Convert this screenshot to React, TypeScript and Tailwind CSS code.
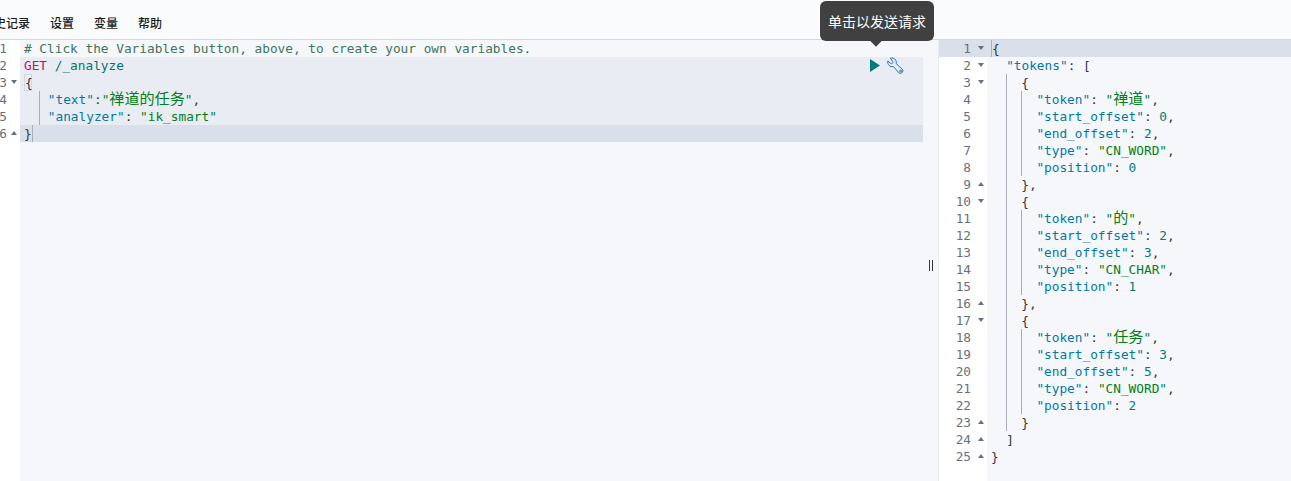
const mono = "font-['DejaVu_Sans_Mono','Noto_Sans_CJK_SC',monospace]"

type Tok = [string, string]

const K = 'text-[#0079a5]'
const S = 'text-[#017f1c]'
const N = 'text-[#017d73]'
const P = 'text-[#343741]'

function Cjk({ children }: { children: string }) {
  return <span className="font-['Noto_Sans_CJK_SC',sans-serif] text-[15.1px] leading-[0]">{children}</span>
}

function Line({ guides = 0, pad = 0, thin = false, toks }: { guides?: number; pad?: number; thin?: boolean; toks: Tok[] }) {
  return (
    <div className="flex h-[17px] items-stretch whitespace-pre leading-[17px]">
      {Array.from({ length: pad }).map((_, i) => (
        <span key={i} className="inline-block w-[15.14px] shrink-0" />
      ))}
      {Array.from({ length: guides }).map((_, i) => (
        <span key={i} className={thin ? 'inline-block w-px shrink-0 bg-[#a8adb8]' : 'inline-block w-[15.14px] shrink-0 border-l border-[#a8adb8]'} />
      ))}
      <span>
        {toks.map(([t, c], i) => (
          <span key={i} className={c}>
            {t.split(/([\u4e00-\u9fff]+)/).map((p, j) => (j % 2 ? <Cjk key={j}>{p}</Cjk> : p))}
          </span>
        ))}
      </span>
    </div>
  )
}

function Fold({ dir }: { dir?: 'up' | 'down' }) {
  if (!dir) return null
  return (
    <span
      className={
        dir === 'down'
          ? 'inline-block h-0 w-0 border-x-[3px] border-t-[4px] border-x-transparent border-t-[#69707d]'
          : 'inline-block h-0 w-0 border-x-[3px] border-b-[4px] border-x-transparent border-b-[#69707d]'
      }
    />
  )
}

const leftFolds: Record<number, 'up' | 'down'> = { 3: 'down', 6: 'up' }
const rightFolds: Record<number, 'up' | 'down'> = {
  1: 'down', 2: 'down', 3: 'down', 9: 'up', 10: 'down', 16: 'up', 17: 'down', 23: 'up', 24: 'up', 25: 'up',
}

function tokenRows(word: string, start: number, end: number, type: string, pos: number, more: boolean) {
  return (
    <div key={word}>
      <Line pad={1} guides={1} toks={[['{', P]]} />
      <Line pad={1} guides={2} toks={[['"token"', K], [': ', P], [`"${word}"`, S], [',', P]]} />
      <Line pad={1} guides={2} toks={[['"start_offset"', K], [': ', P], [String(start), N], [',', P]]} />
      <Line pad={1} guides={2} toks={[['"end_offset"', K], [': ', P], [String(end), N], [',', P]]} />
      <Line pad={1} guides={2} toks={[['"type"', K], [': ', P], [`"${type}"`, S], [',', P]]} />
      <Line pad={1} guides={2} toks={[['"position"', K], [': ', P], [String(pos), N]]} />
      <Line pad={1} guides={1} toks={[[more ? '},' : '}', P]]} />
    </div>
  )
}

export default function App() {
  return (
    <div className={`flex h-[481px] w-[1291px] flex-col overflow-hidden bg-[#fafbfd] ${mono}`}>
      <nav className="flex h-10 shrink-0 items-center gap-[20px] overflow-hidden border-b border-[#d3dae6] pt-[7px] font-['Noto_Sans_CJK_SC',sans-serif] text-xs font-medium text-[#1a1c21]">
        <span className="ml-[-6px] w-[36px] whitespace-nowrap">史记录</span>
        <span>设置</span>
        <span>变量</span>
        <span>帮助</span>
      </nav>
      <div className="flex min-h-0 flex-1 text-[12.78px]">
        {/* request editor */}
        <section className="flex w-[923px] shrink-0">
          <div className="w-5 shrink-0 bg-white text-[#69707d]">
            {[1, 2, 3, 4, 5, 6].map((n) => (
              <div key={n} className="relative h-[17px] leading-[17px]">
                <span className="absolute right-[13px] top-0">{n}</span>
                <span className="absolute left-[11px] top-[6px] flex">
                  <Fold dir={leftFolds[n]} />
                </span>
              </div>
            ))}
          </div>
          <div className="relative min-w-0 flex-1 bg-[#f5f7fa]">
            <div className="pl-1"><Line toks={[['# Click the Variables button, above, to create your own variables.', 'text-[#41755c]']]} /></div>
            <div className="bg-[#e9edf3] pl-1"><Line toks={[['GET', 'text-[#c80a68]'], [' /_analyze', 'text-[#00756c]']]} /></div>
            <div className="bg-[#e9edf3] pl-1">
              <div className="h-[17px] w-[8px] border border-[#d3d7de] leading-[15px] text-[#343741]">{'{'}</div>
            </div>
            <div className="bg-[#e9edf3] pl-1"><Line pad={1} guides={1} thin toks={[[' "text"', K], [':', P], ['"禅道的任务"', S], [',', P]]} /></div>
            <div className="bg-[#e9edf3] pl-1"><Line pad={1} guides={1} thin toks={[[' "analyzer"', K], [': ', P], ['"ik_smart"', S]]} /></div>
            <div className="flex h-[17px] items-stretch bg-[#dae0e9] pl-1 leading-[17px]">
              <span className={P}>{'}'}</span>
              <span className="w-px bg-[#a8adb8]" />
            </div>
            {/* action icons */}
            <div className="absolute right-[19px] top-[17px] flex h-[17px] items-center gap-[6px]">
              <svg width="12" height="15" viewBox="0 0 12 15"><path d="M1 1 L11 7.5 L1 14 Z" fill="#017d73" /></svg>
              <svg width="17" height="17" viewBox="0 0 17 17" fill="none" stroke="#1a78bb" strokeWidth="1" strokeLinejoin="round">
                <path d="M0.9 3.9 L3.4 6.2 A1 1 0 0 0 5.6 4.3 L3.3 1.1 A4.6 4.6 0 0 1 9.2 6.7 L15.4 12.3 A2.5 2.5 0 0 1 11.9 15.8 L6.4 9.6 A4.6 4.6 0 0 1 0.9 3.9 Z" />
                <circle cx="13.6" cy="14" r="0.9" />
              </svg>
            </div>
          </div>
        </section>
        {/* resizer */}
        <div className="flex w-[15px] shrink-0 items-center justify-center bg-[#f5f7fa] pt-[10px]">
          <span className="flex h-[11px] gap-[2px]">
            <span className="w-px bg-[#343741]" />
            <span className="w-px bg-[#343741]" />
          </span>
        </div>
        {/* response */}
        <section className="flex min-w-0 flex-1">
          <div className="w-[49px] shrink-0 border-l border-[#e9edf3] bg-white text-[#69707d]">
            {Array.from({ length: 25 }).map((_, i) => {
              const n = i + 1
              return (
                <div key={n} className={`relative h-[17px] leading-[17px] ${n === 1 ? 'bg-[#dae0e9]' : ''}`}>
                  <span className="absolute right-[16px] top-0">{n}</span>
                  <span className="absolute left-[39px] top-[6px] flex">
                    <Fold dir={rightFolds[n]} />
                  </span>
                </div>
              )
            })}
          </div>
          <div className="min-w-0 flex-1 bg-[#f5f7fa] pl-1">
            <div className="-ml-1 flex h-[17px] bg-[#dae0e9] pl-1 leading-[17px]">
              <span className="w-px bg-[#a8adb8]" />
              <span className={P}>{'{'}</span>
            </div>
            <Line pad={1} toks={[['"tokens"', K], [': ', P], ['[', P]]} />
            {tokenRows('禅道', 0, 2, 'CN_WORD', 0, true)}
            {tokenRows('的', 2, 3, 'CN_CHAR', 1, true)}
            {tokenRows('任务', 3, 5, 'CN_WORD', 2, false)}
            <Line pad={1} toks={[[']', P]]} />
            <Line toks={[['}', P]]} />
          </div>
        </section>
      </div>
      {/* tooltip */}
      <div className="absolute left-[820px] top-px rounded-md bg-[#404040] px-2 py-[10px] font-['Noto_Sans_CJK_SC',sans-serif] text-sm leading-[20px] text-white">
        单击以发送请求
        <span className="absolute bottom-[-4px] left-[52px] h-2 w-2 rotate-45 bg-[#404040]" />
      </div>
    </div>
  )
}
